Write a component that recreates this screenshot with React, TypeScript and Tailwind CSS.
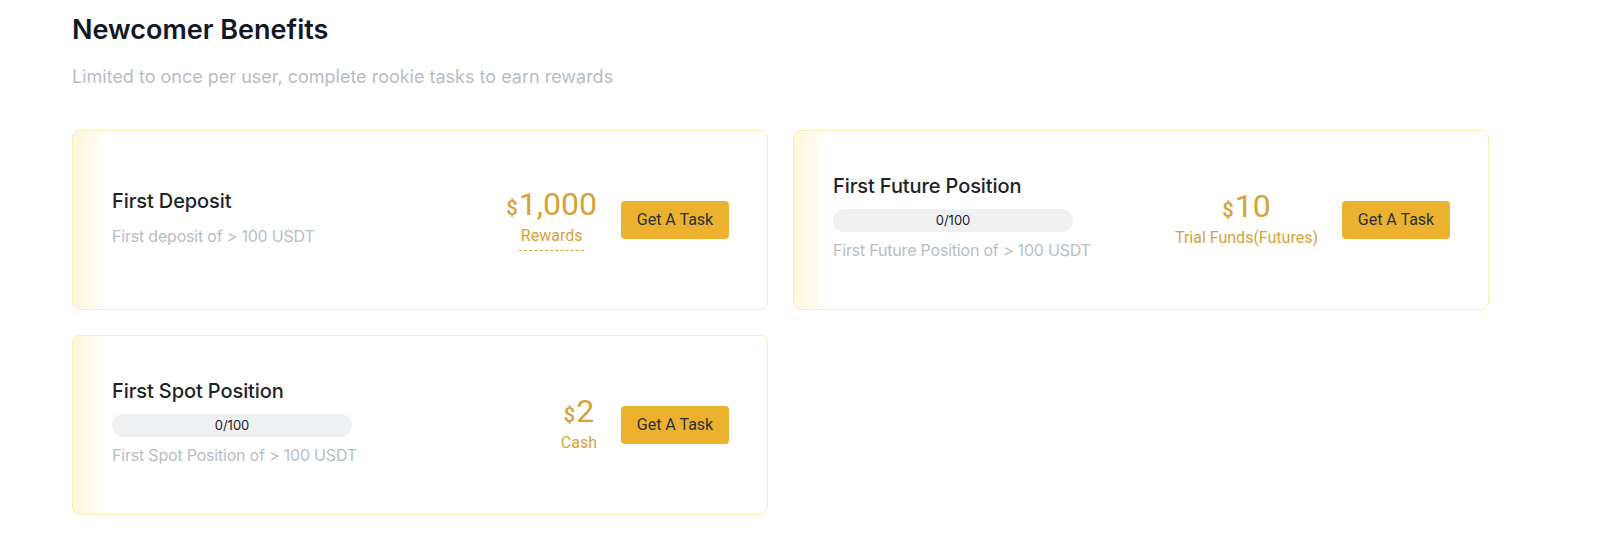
import React from 'react';

interface Task {
  title: string;
  desc: string;
  amount: string;
  label: string;
  progress?: string;
  dashed?: boolean;
}

const tasks: Task[] = [
  { title: 'First Deposit', desc: 'First deposit of > 100 USDT', amount: '1,000', label: 'Rewards', dashed: true },
  {
    title: 'First Future Position',
    desc: 'First Future Position of > 100 USDT',
    amount: '10',
    label: 'Trial Funds(Futures)',
    progress: '0/100',
  },
  {
    title: 'First Spot Position',
    desc: 'First Spot Position of > 100 USDT',
    amount: '2',
    label: 'Cash',
    progress: '0/100',
  },
];

const TaskCard: React.FC<{ task: Task }> = ({ task }) => {
  return (
    <div className="h-[180px] rounded-lg border border-[#fcebb3] bg-[linear-gradient(90deg,#fff6da_0px,#ffffff_34px)] flex items-center justify-between pl-[39px] pr-[38px]">
      <div className="flex flex-col pb-[6px]">
        <h3 className="text-[20px] leading-[24px] font-medium text-[#1e2329] tracking-[-0.1px]">{task.title}</h3>
        {task.progress ? (
          <>
            <div className="mt-[11px] w-[240px] h-[23px] rounded-full bg-[#eff0f2] flex items-center justify-center text-[13px] text-[#1e2329]">
              {task.progress}
            </div>
            <p className="mt-[8px] text-[16px] leading-[20px] text-[#b7bdc6] tracking-[-0.2px]">{task.desc}</p>
          </>
        ) : (
          <p className="mt-[13px] text-[16px] leading-[20px] text-[#b7bdc6] tracking-[-0.2px]">{task.desc}</p>
        )}
      </div>

      <div className="flex items-center gap-[24px]">
        <div className="flex flex-col items-center text-[#d6a23a] font-['Roboto',sans-serif] pb-[2px]">
          <div className="flex items-baseline leading-[34px]">
            <span className="text-[20px] font-semibold mr-[1px]">$</span>
            <span className="text-[32px]">{task.amount}</span>
          </div>
          <span
            className={`text-[16px] leading-[22px] ${
              task.dashed ? 'border-b border-dashed border-[#d6a23a] pb-[3px] px-[2px]' : ''
            }`}
          >
            {task.label}
          </span>
        </div>
        <button className="w-[108px] h-[38px] rounded-[4px] bg-[#ebb12f] text-[16px] text-[#2b3139] font-['Roboto',sans-serif]">
          Get A Task
        </button>
      </div>
    </div>
  );
};

export default function App() {
  return (
    <div className="min-h-[551px] bg-white pl-[72px] pt-[12px] font-['Inter','Roboto',sans-serif]">
      <h1 className="text-[27px] leading-[36px] font-semibold text-[#121826]">
        Newcomer Benefits
      </h1>
      <p className="mt-[17px] text-[18px] leading-[24px] text-[#b7bdc6]">
        Limited to once per user, complete rookie tasks to earn rewards
      </p>
      <div className="mt-[41px] w-[1417px] grid grid-cols-2 gap-[25px]">
        {tasks.map((t) => (
          <TaskCard key={t.title} task={t} />
        ))}
      </div>
    </div>
  );
}
